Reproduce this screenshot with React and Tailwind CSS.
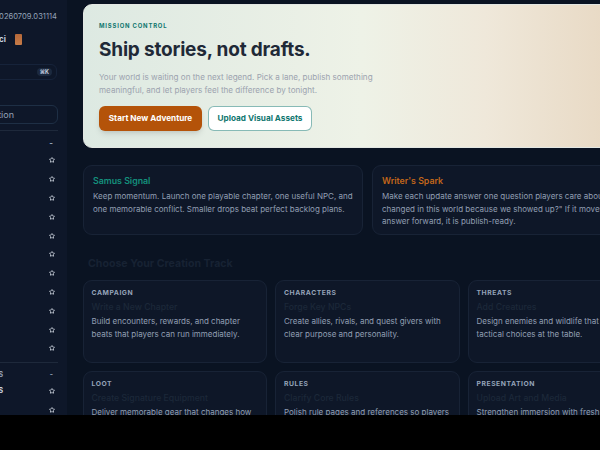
import { Star as StarIcon } from "lucide-react";

const rowsA = Array.from({ length: 11 }, (_, i) => i);

function Star() {
  return <StarIcon size={6} strokeWidth={3.2} className="text-[#d5dce6]" />;
}

function StarRow() {
  return (
    <div className="h-[18.8px] flex items-center justify-end">
      <Star />
    </div>
  );
}

function Sidebar() {
  return (
    <aside className="w-[67px] shrink-0 overflow-hidden bg-[#0e1729]">
      <div className="w-[248px] ml-[-190px] pt-[10px]">
        <div className="h-[14px] flex items-center justify-end pr-[1px] text-[7.6px] text-[#94a3b8] whitespace-nowrap">v0.9.0+20260709.031114</div>
        <div className="mt-[9px] h-[12px] flex items-center justify-end gap-[9px] pr-[36px]">
          <span className="text-[8px] font-bold text-[#cbd5e1] whitespace-nowrap">Samus Argoci</span>
          <span className="w-[7px] h-[11px] rounded-[1px] bg-gradient-to-b from-[#b5683a] to-[#c67c48]" />
        </div>
        <div className="mt-[19px] h-[16px] rounded-md border border-[#16233a] mr-[1px] flex items-center justify-end pr-[4px]">
          <span className="px-[3px] h-[8px] flex items-center rounded-sm bg-[#1c2a3f] text-[5.5px] font-bold text-[#cbd5e1]">⌘K</span>
        </div>
        <div className="mt-[25px] h-[19px] rounded-md border border-[#1e2f45] flex items-center justify-end pr-[43px] text-[9px] text-[#94a3b8] whitespace-nowrap">New Creation</div>
        <div className="mt-[6px] border-t border-[#1e293b] pt-[7px]">
          <div className="h-[10px] flex items-center justify-end pr-[5px] text-[8px] font-bold text-[#94a3b8]">-</div>
          <div className="mt-[3px] pr-[3px]">
            {rowsA.map((i) => <StarRow key={i} />)}
          </div>
        </div>
        <div className="mt-[4px] border-t border-[#1e293b] pt-[7px]">
          <div className="h-[10px] flex items-center justify-between pr-[5px] text-[7px] font-bold text-[#94a3b8]">
            <span className="ml-[160px] w-[33px] text-right whitespace-nowrap">ASSETS</span><span>-</span>
          </div>
          <div className="mt-[2px] pr-[3px]">
            <div className="h-[18.8px] flex items-center justify-between">
              <span className="ml-[160px] w-[33px] text-right text-[7px] font-bold text-[#cbd5e1]">ITEMS</span>
              <Star />
            </div>
            <StarRow />
          </div>
        </div>
      </div>
    </aside>
  );
}

function Track({ tag, title, body }) {
  return (
    <div className="h-[83px] rounded-[9px] border border-[#182336] bg-[#0e1728] px-[8px] pt-[6px] shrink-0">
      <div className="text-[6.8px] leading-[12px] font-bold tracking-[0.08em] text-[#94a3b8]">{tag}</div>
      <div className="mt-[2px] text-[8.7px] leading-[12px] text-[#1c2839] font-medium whitespace-nowrap">{title}</div>
      <p className="mt-[2px] text-[8px] leading-[12.5px] text-[#929fb3]">{body}</p>
    </div>
  );
}

export default function App() {
  return (
    <div className="h-[450px] w-[600px] bg-black overflow-hidden" style={{ fontFamily: "Inter, 'Noto Sans', sans-serif" }}>
      <div className="h-[415px] flex bg-[#0a1322] overflow-hidden">
        <Sidebar />
        <main className="flex-1 min-w-0 overflow-hidden pl-[16px] pt-[4px]">
          <section className="w-[620px] h-[144px] rounded-[9px] border border-[#e3e7e3] bg-[linear-gradient(90deg,#dde9e2_0%,#eef2e7_45%,#efe8da_65%,#e8d9c4_85%,#e8dcc9_100%)] px-[15px] pt-[16px]">
            <div className="text-[5.9px] leading-[10px] font-bold tracking-[0.14em] text-[#0f766e]">MISSION CONTROL</div>
            <h1 className="mt-[5px] text-[19px] leading-[28px] font-bold tracking-[-0.01em] text-[#1f2937]">Ship stories, not drafts.</h1>
            <p className="mt-[7px] w-[290px] text-[8.1px] leading-[13px] text-[#9ca3af]">Your world is waiting on the next legend. Pick a lane, publish something meaningful, and let players feel the difference by tonight.</p>
            <div className="mt-[9px] flex gap-[6px]">
              <button className="w-[103px] h-[25px] rounded-md bg-[#b45309] text-white text-[8.2px] font-bold shadow-md">Start New Adventure</button>
              <button className="w-[104px] h-[25px] rounded-md bg-white border border-[#0f766e]/50 text-[#0f766e] text-[8.2px] font-bold">Upload Visual Assets</button>
            </div>
          </section>
          <div className="mt-[17px] flex gap-[9px] w-[580px]">
            <div className="w-[280px] h-[70px] shrink-0 rounded-[9px] border border-[#182336] bg-[#0e1728] px-[9px] pt-[9px]">
              <h2 className="text-[8.8px] leading-[12px] font-semibold text-[#14917d]">Samus Signal</h2>
              <p className="mt-[3px] text-[8px] leading-[12.5px] text-[#929fb3]">Keep momentum. Launch one playable chapter, one useful NPC, and one memorable conflict. Smaller drops beat perfect backlog plans.</p>
            </div>
            <div className="w-[280px] h-[70px] shrink-0 rounded-[9px] border border-[#182336] bg-[#0e1728] px-[9px] pt-[9px]">
              <h2 className="text-[8.8px] leading-[12px] font-semibold text-[#c2661a]">Writer's Spark</h2>
              <p className="mt-[3px] text-[8px] leading-[12.5px] text-[#929fb3]">Make each update answer one question players care about: "What changed in this world because we showed up?" If it moves that answer forward, it is publish-ready.</p>
            </div>
          </div>
          <h2 className="mt-[21px] text-[10.6px] leading-[16px] font-bold text-[#172233] whitespace-nowrap ml-[5px]">Choose Your Creation Track</h2>
          <div className="mt-[8px] ml-[-0.5px] grid grid-cols-[184.5px_184.5px_184.5px] gap-[8px]">
            <Track tag="CAMPAIGN" title="Write a New Chapter" body="Build encounters, rewards, and chapter beats that players can run immediately." />
            <Track tag="CHARACTERS" title="Forge Key NPCs" body="Create allies, rivals, and quest givers with clear purpose and personality." />
            <Track tag="THREATS" title="Add Creatures" body="Design enemies and wildlife that create tactical choices at the table." />
            <Track tag="LOOT" title="Create Signature Equipment" body="Deliver memorable gear that changes how heroes solve problems." />
            <Track tag="RULES" title="Clarify Core Rules" body="Polish rule pages and references so players can stay in the moment." />
            <Track tag="PRESENTATION" title="Upload Art and Media" body="Strengthen immersion with fresh visuals and sound for your world." />
          </div>
        </main>
      </div>
    </div>
  );
}
